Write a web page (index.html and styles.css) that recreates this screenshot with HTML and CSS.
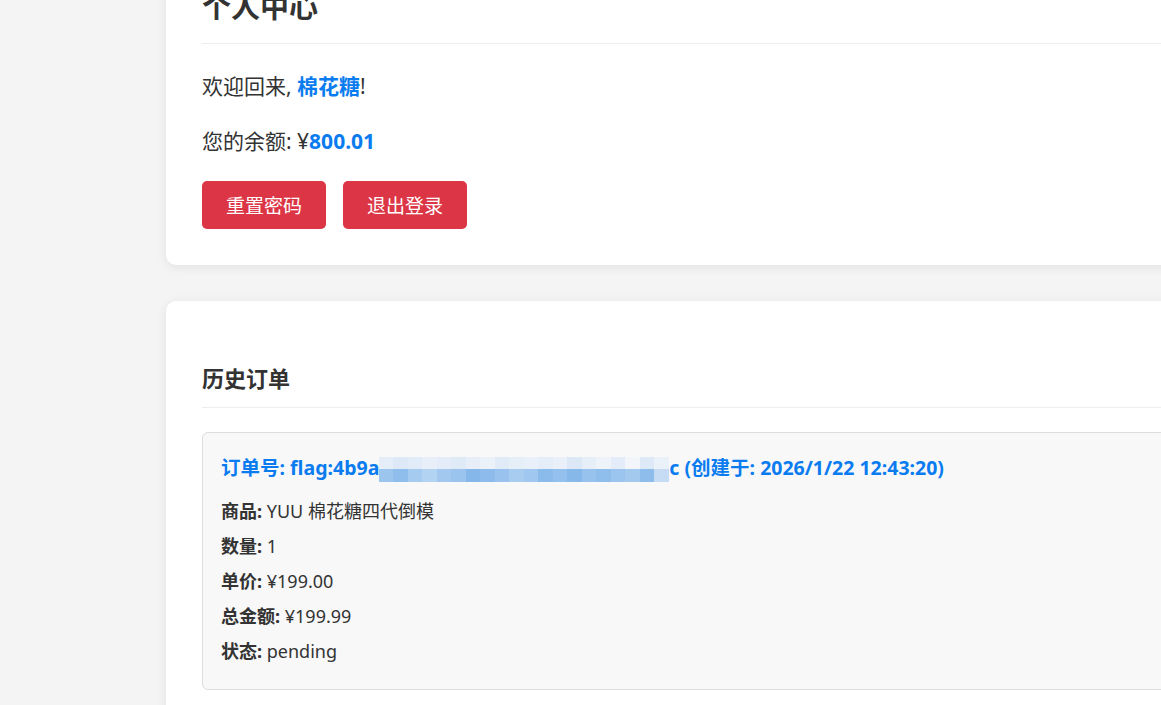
FILE: index.html
```html
<!DOCTYPE html>
<html lang="zh-CN">
<head>
    <meta charset="UTF-8">
    <meta name="viewport" content="width=device-width, initial-scale=1.0">
    <title>个人中心</title>
    <link rel="stylesheet" href="styles.css">
</head>
<body>

    <div class="container">
        <div class="card">
            <h2 class="card-title">个人中心</h2>
            <p class="info">欢迎回来, <strong class="hl">棉花糖</strong>!</p>
            <p class="info">您的余额: ¥<strong class="hl">800.01</strong></p>
            <div class="actions">
                <button class="btn-danger">重置密码</button>
                <button class="btn-danger">退出登录</button>
            </div>
        </div>

        <div class="card">
            <h3 class="section-title">历史订单</h3>
            <div class="order">
                <p class="order-title">订单号: flag:4b9a<span class="mosaic"></span>c (创建于: 2026/1/22 12:43:20)</p>
                <p class="order-line"><b>商品:</b> YUU 棉花糖四代倒模</p>
                <p class="order-line"><b>数量:</b> 1</p>
                <p class="order-line"><b>单价:</b> ¥199.00</p>
                <p class="order-line"><b>总金额:</b> ¥199.99</p>
                <p class="order-line"><b>状态:</b> pending</p>
            </div>
        </div>
    </div>

</body>
</html>
```

FILE: styles.css
```css
:root { --blue: #0a7cf0; --red: #dc3545; --text: #333; --bg: #f4f4f4; }
html, body { overflow: hidden; }
body {
    margin: 0;
    background: var(--bg);
    color: var(--text);
    font-family: "Noto Sans", "Noto Sans CJK SC", sans-serif;
    font-size: 18px;
}

/* page is shown scrolled down a bit */
.container { padding-left: 166px; margin-top: -46px; }

.card {
    width: 1100px;
    background: #fff;
    border-radius: 10px;
    padding: 36px;
    margin-bottom: 36px;
    box-shadow: 0 2px 12px rgba(0,0,0,0.08);
}

.card-title {
    margin: 0 0 26px;
    font-size: 29px;
    line-height: 1.2;
    padding-bottom: 18px;
    border-bottom: 1px solid #eee;
}
.info { margin: 22px 0; font-size: 21px; line-height: 33px; }
.hl { color: var(--blue); }

.actions { display: flex; gap: 17px; margin-top: 23px; }
.btn-danger {
    background: var(--red);
    color: #fff;
    border: none;
    border-radius: 5px;
    height: 48px;
    padding: 0 24px;
    font-family: inherit;
    font-size: 19px;
    cursor: pointer;
}

/* HISTORIAL */
.section-title {
    margin: 28px 0 24px;
    font-size: 22px;
    line-height: 27px;
    padding-bottom: 15px;
    border-bottom: 1px solid #eee;
}

.order {
    background: #f8f8f8;
    border: 1px solid #ddd;
    border-radius: 6px;
    padding: 21px 18px 16px;
}
.order-title { margin: 0 0 16px; color: var(--blue); font-weight: bold; font-size: 19.5px; line-height: 27px; }
.order-line { margin: 8px 0; line-height: 27px; }

/* pixelado sobre el flag */
.mosaic {
    display: inline-block;
    width: 290px;
    height: 25px;
    vertical-align: middle;
    background:
        linear-gradient(to right,
            #9cc5ee 0 14px, #8fbdec 14px 29px, #a6cbf0 29px 43px, #b3d3f2 43px 58px,
            #a2c8ef 58px 72px, #9ac3ee 72px 87px, #85b7ea 87px 101px, #8dbcec 101px 116px,
            #99c3ee 116px 130px, #a7ccf0 130px 145px, #9fc7ef 145px 159px, #8bbbeb 159px 174px,
            #93c0ed 174px 188px, #86b8ea 188px 203px, #97c2ee 203px 217px, #8fbeec 217px 232px,
            #9bc5ee 232px 246px, #a3c9ef 246px 261px, #8ebdec 261px 275px, #c5dcf4 275px 290px)
            0 12px / 100% 13px no-repeat,
        linear-gradient(to right,
            #e4edf8 0 14px, #dde9f7 14px 29px, #e2ecf8 29px 43px, #e8eff8 43px 58px,
            #e3ecf8 58px 72px, #dfeaf7 72px 87px, #e7eef8 87px 101px, #ebf1f9 101px 116px,
            #e1ebf7 116px 130px, #e6eef8 130px 145px, #eaf0f9 145px 159px, #e5edf8 159px 174px,
            #e9f0f9 174px 188px, #dce8f6 188px 203px, #e6eef8 203px 217px, #eef3fa 217px 232px,
            #e3ecf8 232px 246px, #f2f6fb 246px 261px, #dde9f7 261px 275px, #eaf1f9 275px 290px)
            0 0 / 100% 12px no-repeat;
}
```
